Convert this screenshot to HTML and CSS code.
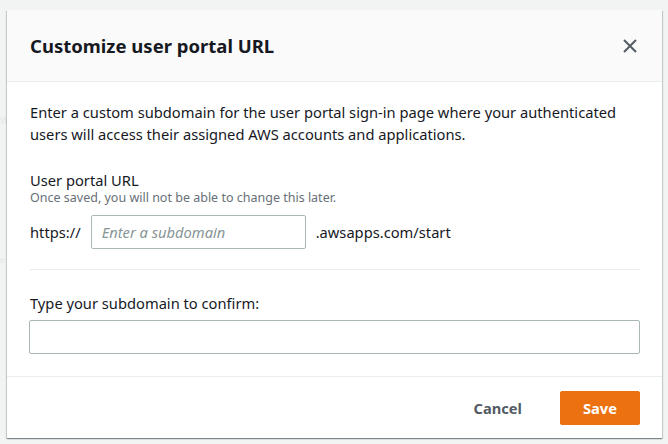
FILE: index.html
```html
<!DOCTYPE html>
<html lang="en">
<head>
<meta charset="utf-8">
<title>Customize user portal URL</title>
<link rel="stylesheet" href="styles.css">
</head>
<body>
<div class="backdrop">
  <div class="page-ghost">
    <span class="ghost g1">W</span>
    <span class="ghost g2">e</span>
  </div>
  <div class="modal" role="dialog" aria-labelledby="modal-title">
    <header class="modal-header">
      <h2 id="modal-title" class="modal-title">Customize user portal URL</h2>
      <button class="close-btn" aria-label="Close">
        <svg width="16" height="16" viewBox="0 0 16 16" aria-hidden="true">
          <path d="M2 2 L14 14 M14 2 L2 14" stroke="#545b64" stroke-width="2" fill="none"/>
        </svg>
      </button>
    </header>
    <div class="modal-body">
      <p class="intro">Enter a custom subdomain for the user portal sign-in page where your authenticated users will access their assigned AWS accounts and applications.</p>
      <div class="field">
        <label class="field-label" for="subdomain">User portal URL</label>
        <div class="field-desc">Once saved, you will not be able to change this later.</div>
        <div class="url-row">
          <span class="url-part">https://</span>
          <input id="subdomain" class="text-input sub-input" type="text" placeholder="Enter a subdomain">
          <span class="url-part">.awsapps.com/start</span>
        </div>
      </div>
      <hr class="divider">
      <div class="field">
        <label class="field-label confirm-label" for="confirm">Type your subdomain to confirm:</label>
        <input id="confirm" class="text-input full-input" type="text">
      </div>
    </div>
    <footer class="modal-footer">
      <button class="btn btn-link">Cancel</button>
      <button class="btn btn-primary">Save</button>
    </footer>
  </div>
</div>
</body>
</html>
```
FILE: styles.css
```css
* {
  box-sizing: border-box;
}

html, body {
  margin: 0;
  padding: 0;
}

body {
  background: #f2f3f3;
  font-family: "Noto Sans", "Open Sans", "Liberation Sans", Arial, sans-serif;
  color: #16191f;
  font-size: 14.7px;
  line-height: 22px;
}

.backdrop {
  position: relative;
  width: 668px;
  height: 444px;
  padding: 10px 6px 0 7px;
  overflow: hidden;
}

/* faint page content peeking out behind the dialog */
.page-ghost {
  position: absolute;
  left: 0;
  top: 0;
  width: 7px;
  height: 444px;
}

.ghost {
  position: absolute;
  left: 0;
  color: #e3e7e7;
  font-size: 9px;
  line-height: 10px;
}

.g1 { top: 116px; }
.g2 { top: 255px; }

.modal {
  position: relative;
  width: 655px;
  height: 428px;
  background: #fff;
  display: flex;
  flex-direction: column;
  box-shadow: 0 1px 1px 0 rgba(0, 28, 36, 0.3), 1px 1px 1px 0 rgba(0, 28, 36, 0.15), -1px 1px 1px 0 rgba(0, 28, 36, 0.15);
}

.modal-header {
  height: 72px;
  flex: none;
  background: #fafafa;
  border-bottom: 1px solid #eaeded;
  display: flex;
  align-items: center;
  justify-content: space-between;
  padding: 0 24px 0 23px;
}

.modal-title {
  margin: 0;
  font-size: 18.5px;
  line-height: 22px;
  font-weight: 700;
  color: #16191f;
}

.close-btn {
  width: 16px;
  height: 16px;
  padding: 0;
  border: 0;
  background: none;
  display: flex;
  cursor: pointer;
}

.modal-body {
  padding: 19px 22px 0 22px;
  height: 295px;
  flex: none;
  border-bottom: 1px solid #eaeded;
}

.intro {
  margin: 0 0 0 1px;
}

.field {
  display: flex;
  flex-direction: column;
}

.field-label {
  margin-top: 25px;
  line-height: 20px;
  padding-left: 1px;
}

.field-desc {
  font-size: 12.5px;
  line-height: 16px;
  color: #687078;
  padding-left: 1px;
}

.url-row {
  display: flex;
  align-items: center;
  gap: 10px;
  margin-top: 9px;
  padding-left: 1px;
}

.text-input {
  height: 34px;
  border: 1px solid #aab7b8;
  border-radius: 2px;
  background: #fff;
  font-family: inherit;
  font-size: 14.7px;
  color: #16191f;
  padding: 4px 10px;
  outline: none;
}

.text-input::placeholder {
  color: #879596;
  font-style: italic;
}

.sub-input {
  width: 215px;
}

.divider {
  border: 0;
  border-top: 1px solid #eaeded;
  margin: 20px 0 0 1px;
}

.confirm-label {
  margin-top: 23px;
  margin-bottom: 7px;
}

.full-input {
  width: 611px;
}

.modal-footer {
  flex: 1;
  display: flex;
  align-items: center;
  justify-content: flex-end;
  padding: 0 22px;
  gap: 17px;
}

.btn {
  height: 34px;
  border-radius: 2px;
  font-family: inherit;
  font-size: 14.7px;
  font-weight: 700;
  border: 1px solid transparent;
  cursor: pointer;
  padding: 0 20px;
}

.btn-link {
  background: none;
  color: #545b64;
}

.btn-primary {
  width: 80px;
  background: #ec7211;
  border-color: #ec7211;
  color: #fff;
}
```
